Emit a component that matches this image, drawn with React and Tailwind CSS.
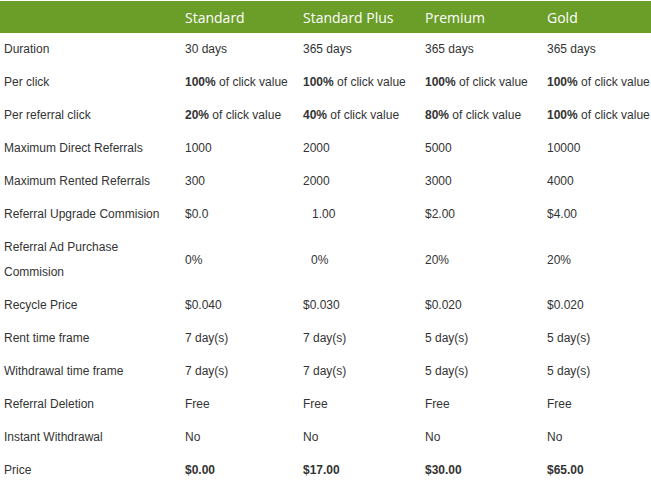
import React from 'react';

const plans = ['Standard', 'Standard Plus', 'Premium', 'Gold'];

const B = ({ v }) => (
  <span>
    <b className="font-bold">{v}</b> of click value
  </span>
);

const rows = [
  ['Duration', ['30 days', '365 days', '365 days', '365 days']],
  ['Per click', [<B v="100%" />, <B v="100%" />, <B v="100%" />, <B v="100%" />]],
  ['Per referral click', [<B v="20%" />, <B v="40%" />, <B v="80%" />, <B v="100%" />]],
  ['Maximum Direct Referrals', ['1000', '2000', '5000', '10000']],
  ['Maximum Rented Referrals', ['300', '2000', '3000', '4000']],
  ['Referral Upgrade Commision', ['$0.0', <span className="pl-[9px]">1.00</span>, '$2.00', '$4.00']],
  ['Referral Ad Purchase Commision', ['0%', <span className="pl-[8px]">0%</span>, '20%', '20%']],
  ['Recycle Price', ['$0.040', '$0.030', '$0.020', '$0.020']],
  ['Rent time frame', ['7 day(s)', '7 day(s)', '5 day(s)', '5 day(s)']],
  ['Withdrawal time frame', ['7 day(s)', '7 day(s)', '5 day(s)', '5 day(s)']],
  ['Referral Deletion', ['Free', 'Free', 'Free', 'Free']],
  ['Instant Withdrawal', ['No', 'No', 'No', 'No']],
  ['Price', [<b>$0.00</b>, <b>$17.00</b>, <b>$30.00</b>, <b>$65.00</b>]],
];

const cols = 'grid grid-cols-[181px_118px_122px_122px_110px]';

export default function App() {
  return (
    <div className="w-[651px] h-[481px] overflow-hidden bg-white font-['Liberation_Sans',Arial,sans-serif] text-[12px] text-[#333]">
      <div className={`${cols} mt-px h-[32px] items-center bg-[#6a9e29] text-white font-['Open_Sans',sans-serif] text-[14px]`}>
        <div />
        {plans.map((p) => (
          <div key={p} className="px-1">{p}</div>
        ))}
      </div>
      {rows.map(([label, vals]) => (
        <div key={label} className={`${cols} items-center py-1 leading-[25px]`}>
          <div className="px-1">{label}</div>
          {vals.map((v, i) => (
            <div key={i} className="px-1 whitespace-nowrap">{v}</div>
          ))}
        </div>
      ))}
    </div>
  );
}
